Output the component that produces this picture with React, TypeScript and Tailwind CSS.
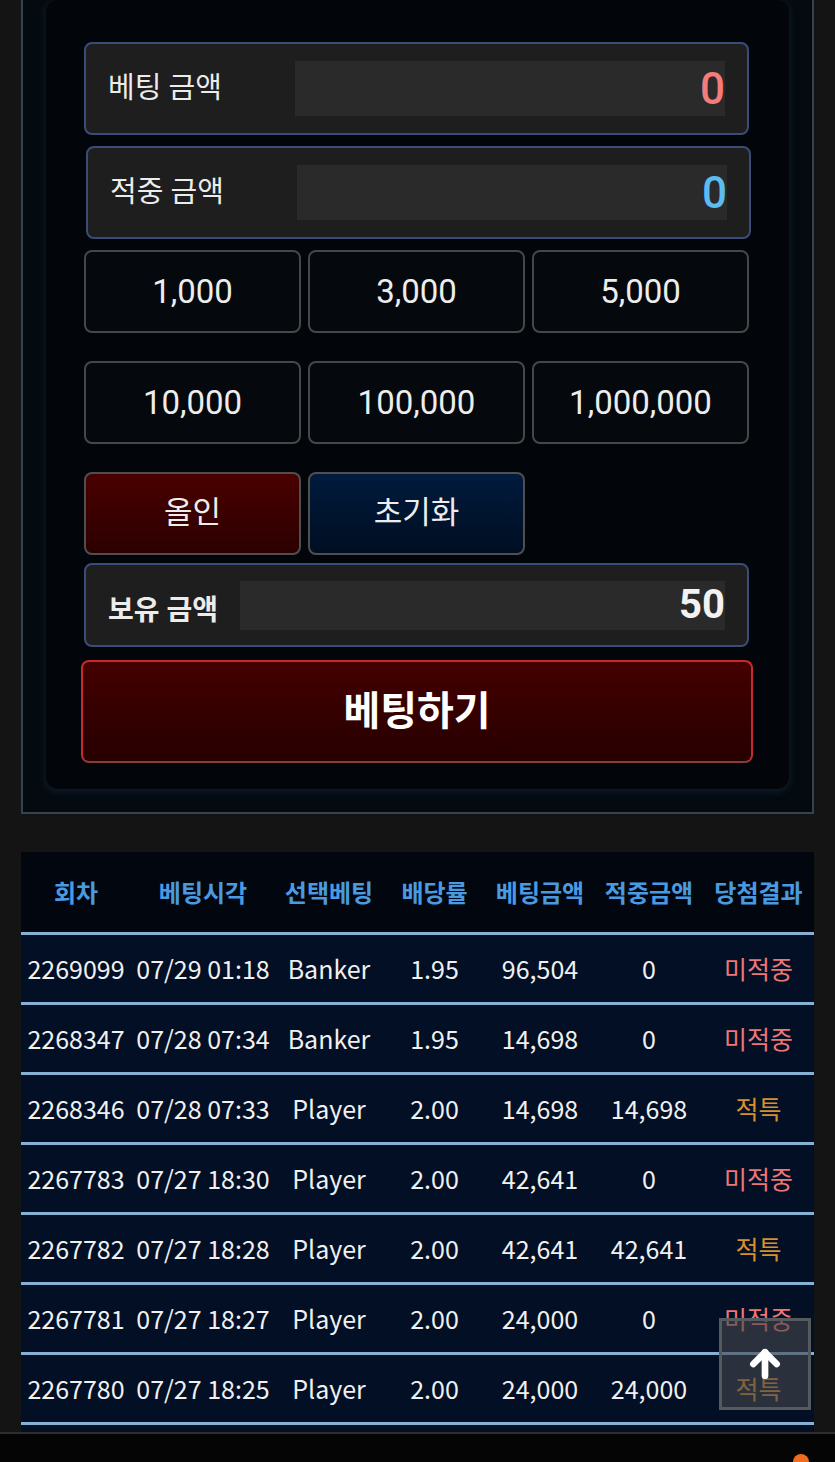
import { ArrowUp } from "lucide-react";

const amounts = ["1,000", "3,000", "5,000", "10,000", "100,000", "1,000,000"];

const history = [
  { round: "2269099", time: "07/29 01:18", pick: "Banker", odds: "1.95", bet: "96,504", win: "0", result: "미적중" },
  { round: "2268347", time: "07/28 07:34", pick: "Banker", odds: "1.95", bet: "14,698", win: "0", result: "미적중" },
  { round: "2268346", time: "07/28 07:33", pick: "Player", odds: "2.00", bet: "14,698", win: "14,698", result: "적특" },
  { round: "2267783", time: "07/27 18:30", pick: "Player", odds: "2.00", bet: "42,641", win: "0", result: "미적중" },
  { round: "2267782", time: "07/27 18:28", pick: "Player", odds: "2.00", bet: "42,641", win: "42,641", result: "적특" },
  { round: "2267781", time: "07/27 18:27", pick: "Player", odds: "2.00", bet: "24,000", win: "0", result: "미적중" },
  { round: "2267780", time: "07/27 18:25", pick: "Player", odds: "2.00", bet: "24,000", win: "24,000", result: "적특" },
];

const headers = ["회차", "베팅시각", "선택베팅", "배당률", "베팅금액", "적중금액", "당첨결과"];

const cols = "grid grid-cols-[110px_144px_108px_103px_108px_110px_109px]";

function AmountField({ label, value, valueClass, shift }: { label: string; value: string; valueClass: string; shift?: boolean }) {
  return (
    <div
      className={`flex h-[93px] items-center rounded-lg border-2 border-[#3b4c78] bg-[#1e1e1e] px-[22px] ${
        shift ? "ml-[2px] -mr-[2px]" : ""
      }`}
    >
      <span className="w-[187px] shrink-0 text-[29px] text-[#ececec]">{label}</span>
      <div className={`flex h-[55px] flex-1 items-center justify-end bg-[#2a2a2a] text-[44px] font-medium leading-none ${valueClass}`}>
        {value}
      </div>
    </div>
  );
}

export default function App() {
  return (
    <div className="min-h-[1462px] overflow-hidden bg-[#141414] font-['Roboto','Noto_Sans_CJK_KR',sans-serif]">
      {/* betting panel */}
      <div className="mx-[21px] -mt-[25px] border-2 border-[#34444f] bg-[#040a10] p-[23px]">
        <div className="rounded-xl bg-[#02060a] pt-[42px] pr-[40px] pb-[26px] pl-[38px] shadow-[0_2px_8px_rgba(40,60,80,0.45)]">
          <div className="flex flex-col gap-[11px]">
            <AmountField label="베팅 금액" value="0" valueClass="text-[#f47c7c]" />
            <AmountField label="적중 금액" value="0" valueClass="text-[#5bbcf2]" shift />
          </div>

          <div className="mt-[11px] grid grid-cols-3 gap-x-[7px] gap-y-[28px]">
            {amounts.map((a) => (
              <button
                key={a}
                type="button"
                className="h-[83px] rounded-lg border-2 border-[#474747] bg-[#05080c] text-[33px] text-[#ededed]"
              >
                {a}
              </button>
            ))}
            <button
              type="button"
              className="h-[83px] rounded-lg border-2 border-[#4f4f4f] bg-gradient-to-b from-[#4a0000] to-[#2c0000] text-[31px] text-[#ededed]"
            >
              올인
            </button>
            <button
              type="button"
              className="h-[83px] rounded-lg border-2 border-[#4f4f4f] bg-gradient-to-b from-[#001b3e] to-[#000e22] text-[31px] text-[#ededed]"
            >
              초기화
            </button>
          </div>

          <div className="mt-[8px] flex h-[84px] items-center rounded-lg border-2 border-[#3b4c78] bg-[#1e1e1e] px-[22px]">
            <span className="w-[132px] shrink-0 pt-[12px] text-[28px] font-bold text-[#ececec]">보유 금액</span>
            <div className="flex h-[49px] flex-1 items-center justify-end bg-[#2a2a2a] text-[40px] font-bold leading-none text-[#f2f2f2]">
              50
            </div>
          </div>

          <button
            type="button"
            className="mt-[13px] -ml-[3px] flex h-[103px] w-[calc(100%+7px)] items-center justify-center rounded-lg border-2 border-[#c62a2e] border-b-[#8a3c3c] bg-gradient-to-b from-[#440000] to-[#270000] text-[40px] font-bold text-white"
          >
            베팅하기
          </button>
        </div>
      </div>

      {/* history table */}
      <div className="mx-[21px] mt-[38px] font-['Noto_Sans_CJK_KR',sans-serif]">
        <div className={`${cols} h-[83px] items-center border-b-[3px] border-[#86b0d4] bg-[#02070f] text-center text-[24px] font-bold text-[#4a9ae0]`}>
          {headers.map((h) => (
            <span key={h}>{h}</span>
          ))}
        </div>
        {history.map((r) => (
          <div
            key={r.round}
            className={`${cols} h-[70px] items-center border-b-[3px] border-[#86b0d4] bg-[#020f24] text-center text-[25px] text-[#f0f0f0]`}
          >
            <span>{r.round}</span>
            <span>{r.time}</span>
            <span>{r.pick}</span>
            <span>{r.odds}</span>
            <span>{r.bet}</span>
            <span>{r.win}</span>
            <span className={r.result === "적특" ? "text-[#d88f2c]" : "text-[#ef7676]"}>{r.result}</span>
          </div>
        ))}
        <div className="h-[40px] bg-[#020f24]" />
      </div>

      {/* scroll to top */}
      <button
        type="button"
        className="fixed right-[24px] bottom-[52px] flex h-[92px] w-[92px] items-center justify-center border-[3px] border-[#555a5f] bg-[rgba(70,72,76,0.6)]"
      >
        <ArrowUp size={40} strokeWidth={4} className="text-white" />
      </button>

      {/* bottom bar */}
      <div className="fixed bottom-0 left-0 right-0 h-[30px] border-t-2 border-[#2e2e2e] bg-[#050505]">
        <span className="absolute top-[20px] right-[26px] h-[16px] w-[16px] rounded-full bg-[#f26a1b]" />
      </div>
    </div>
  );
}
